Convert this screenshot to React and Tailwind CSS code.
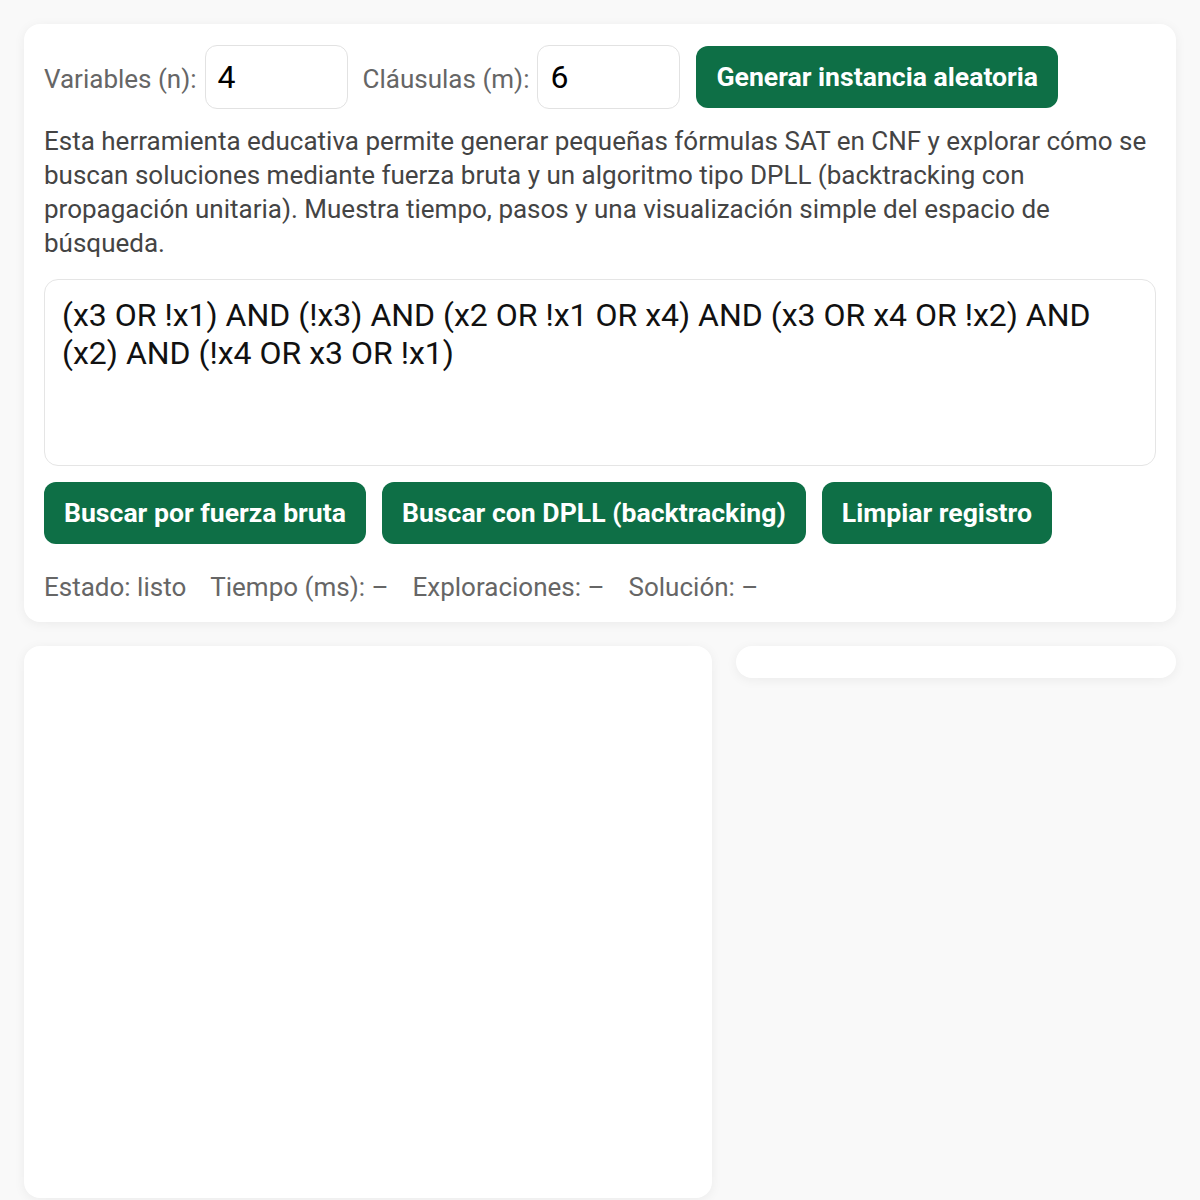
export default function App() {
  const btn =
    "bg-[#0e6f46] text-white font-bold text-[26.6px] leading-none rounded-[12px] px-[20px] h-[62px] flex items-center whitespace-nowrap";
  const input =
    "w-[143px] h-[64px] border-[1.5px] border-[#e2e2e2] rounded-[12px] flex items-center pl-[12px] text-[32px] text-black";
  return (
    <div
      className="min-h-[1200px] bg-[#f9f9f9] p-[24px] flex flex-col gap-[24px]"
      style={{ fontFamily: "Roboto, 'Noto Sans', sans-serif" }}
    >
      <div className="bg-white rounded-[16px] shadow-[0_2px_12px_rgba(0,0,0,0.06)] px-[20px] pt-[21px] pb-[18px]">
        <div className="flex items-center">
          <span className="text-[26px] text-[#666] mr-[8px] mt-[4px]">Variables (n):</span>
          <div className={input}>4</div>
          <span className="text-[26px] text-[#666] ml-[15px] mr-[8px] mt-[4px]">Cláusulas (m):</span>
          <div className={input}>6</div>
          <div className="ml-[16px]">
            <div className={btn}>Generar instancia aleatoria</div>
          </div>
        </div>
        <p className="mt-[15px] text-[26px] leading-[34px] text-[#444]">
          Esta herramienta educativa permite generar pequeñas fórmulas SAT en CNF y explorar cómo se buscan soluciones mediante fuerza bruta y un algoritmo tipo DPLL (backtracking con propagación unitaria). Muestra tiempo, pasos y una visualización simple del espacio de búsqueda.
        </p>
        <div className="mt-[19px] h-[187px] border-[1.5px] border-[#e5e5e5] rounded-[14px] px-[17px] pt-[16px] text-[32px] leading-[38px] text-[#111]">
          (x3 OR !x1) AND (!x3) AND (x2 OR !x1 OR x4) AND (x3 OR x4 OR !x2) AND (x2) AND (!x4 OR x3 OR !x1)
        </div>
        <div className="mt-[16px] flex gap-[16px]">
          <div className={btn}>Buscar por fuerza bruta</div>
          <div className={btn}>Buscar con DPLL (backtracking)</div>
          <div className={btn}>Limpiar registro</div>
        </div>
        <div className="mt-[26px] flex gap-[24px] text-[26px] leading-[34px] text-[#666]">
          <span>Estado: listo</span>
          <span>Tiempo (ms): –</span>
          <span>Exploraciones: –</span>
          <span>Solución: –</span>
        </div>
      </div>
      <div className="grid grid-cols-[688px_440px] gap-[24px] items-start">
        <div className="bg-white rounded-[16px] shadow-[0_2px_12px_rgba(0,0,0,0.06)] h-[552px]"></div>
        <div className="bg-white rounded-[16px] shadow-[0_2px_12px_rgba(0,0,0,0.06)] h-[32px]"></div>
      </div>
    </div>
  );
}
